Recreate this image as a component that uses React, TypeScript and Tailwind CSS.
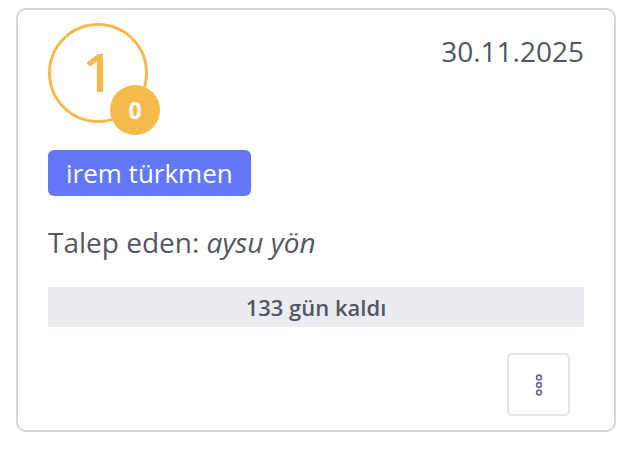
export default function App() {
  return (
    <div className="pl-[16px] pt-[8px]" style={{ fontFamily: '"Open Sans", sans-serif' }}>
      <div className="w-[600px] h-[424px] border-2 border-[#d7d7d7] rounded-[10px] px-[30px] pt-[13px] flex flex-col text-[#555663]">
        <div className="flex justify-between items-start">
          <div className="relative w-[100px] h-[100px] rounded-full border-[3px] border-[#f5bb4a] flex items-center justify-center">
            <span className="text-[53px] font-semibold leading-none text-[#f5bb4a] -mt-[3px]">1</span>
            <div className="absolute left-[59px] top-[59px] w-[50px] h-[50px] rounded-full bg-[#f5bb4a] flex items-center justify-center">
              <span className="text-[23px] font-bold text-white leading-none">0</span>
            </div>
          </div>
          <div className="text-[28px] leading-none mt-[14px]">30.11.2025</div>
        </div>
        <div className="mt-[27px] flex">
          <div className="h-[46px] px-[18px] rounded-[6px] bg-[#6278f6] text-white text-[26px] flex items-center">
            irem türkmen
          </div>
        </div>
        <div className="mt-[28px] text-[28px] leading-[36px]">
          Talep eden: <i>aysu yön</i>
        </div>
        <div className="mt-[27px] h-[40px] bg-[#ebecf1] flex items-center justify-center text-[22px] font-semibold">
          133 gün kaldı
        </div>
        <div className="flex justify-end mt-[26px] pr-[14px]">
          <button className="w-[63px] h-[63px] border-2 border-[#e4e4ea] rounded-[5px] flex items-center justify-center">
            <svg width="8" height="22" viewBox="0 0 8 22" fill="none" stroke="#6b6b9a" strokeWidth="1.6">
              <circle cx="4" cy="3.5" r="2.4" />
              <circle cx="4" cy="11" r="2.4" />
              <circle cx="4" cy="18.5" r="2.4" />
            </svg>
          </button>
        </div>
      </div>
    </div>
  );
}
